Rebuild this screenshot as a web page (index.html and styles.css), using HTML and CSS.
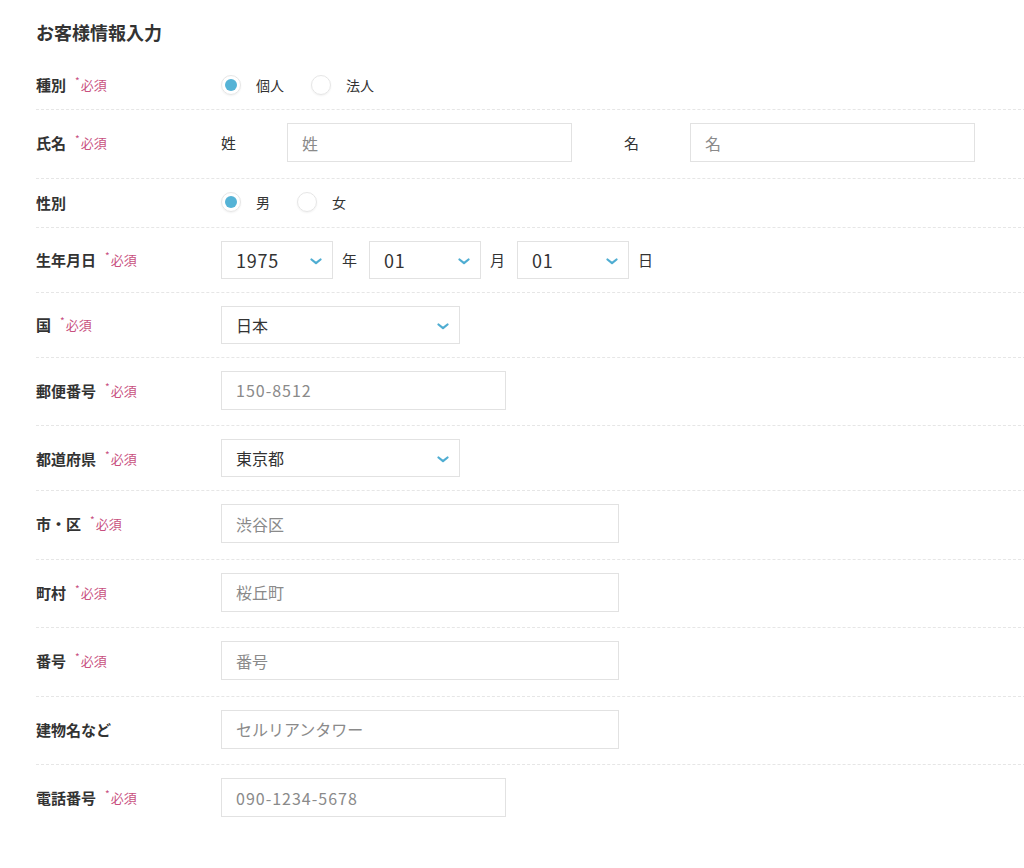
FILE: index.html
```html
<!DOCTYPE html>
<html lang="ja">
<head>
    <meta charset="UTF-8">
    <meta name="viewport" content="width=device-width, initial-scale=1.0">
    <title>お客様情報入力</title>
    <link rel="stylesheet" href="styles.css">
</head>
<body>
    <div class="form">
        <h2 class="form-title">お客様情報入力</h2>

        <div class="row row-radio">
            <div class="label">種別<span class="req"><i>*</i>必須</span></div>
            <div class="field">
                <label class="radio"><span class="radio-mark checked"></span>個人</label>
                <label class="radio"><span class="radio-mark"></span>法人</label>
            </div>
        </div>

        <div class="row">
            <div class="label">氏名<span class="req"><i>*</i>必須</span></div>
            <div class="field">
                <span class="sub-label">姓</span>
                <input class="input w-name" type="text" placeholder="姓">
                <span class="sub-label sub-label-gap">名</span>
                <input class="input w-name" type="text" placeholder="名">
            </div>
        </div>

        <div class="row row-radio">
            <div class="label">性別</div>
            <div class="field">
                <label class="radio"><span class="radio-mark checked"></span>男</label>
                <label class="radio"><span class="radio-mark"></span>女</label>
            </div>
        </div>

        <div class="row row-select">
            <div class="label">生年月日<span class="req"><i>*</i>必須</span></div>
            <div class="field">
                <div class="select w-date">
                    <span class="select-value num">1975</span>
                    <svg class="chevron" width="12" height="7" viewBox="0 0 12 7"><path d="M1.5 1.5 L6 5.2 L10.5 1.5" fill="none" stroke="#4fadd2" stroke-width="2.2" stroke-linecap="round" stroke-linejoin="round"/></svg>
                </div>
                <span class="unit">年</span>
                <div class="select w-date">
                    <span class="select-value num">01</span>
                    <svg class="chevron" width="12" height="7" viewBox="0 0 12 7"><path d="M1.5 1.5 L6 5.2 L10.5 1.5" fill="none" stroke="#4fadd2" stroke-width="2.2" stroke-linecap="round" stroke-linejoin="round"/></svg>
                </div>
                <span class="unit">月</span>
                <div class="select w-date">
                    <span class="select-value num">01</span>
                    <svg class="chevron" width="12" height="7" viewBox="0 0 12 7"><path d="M1.5 1.5 L6 5.2 L10.5 1.5" fill="none" stroke="#4fadd2" stroke-width="2.2" stroke-linecap="round" stroke-linejoin="round"/></svg>
                </div>
                <span class="unit">日</span>
            </div>
        </div>

        <div class="row row-select">
            <div class="label">国<span class="req"><i>*</i>必須</span></div>
            <div class="field">
                <div class="select w-wide">
                    <span class="select-value">日本</span>
                    <svg class="chevron" width="12" height="7" viewBox="0 0 12 7"><path d="M1.5 1.5 L6 5.2 L10.5 1.5" fill="none" stroke="#4fadd2" stroke-width="2.2" stroke-linecap="round" stroke-linejoin="round"/></svg>
                </div>
            </div>
        </div>

        <div class="row">
            <div class="label">郵便番号<span class="req"><i>*</i>必須</span></div>
            <div class="field">
                <input class="input input-num w-mid" type="text" placeholder="150-8512">
            </div>
        </div>

        <div class="row row-select">
            <div class="label">都道府県<span class="req"><i>*</i>必須</span></div>
            <div class="field">
                <div class="select w-wide">
                    <span class="select-value">東京都</span>
                    <svg class="chevron" width="12" height="7" viewBox="0 0 12 7"><path d="M1.5 1.5 L6 5.2 L10.5 1.5" fill="none" stroke="#4fadd2" stroke-width="2.2" stroke-linecap="round" stroke-linejoin="round"/></svg>
                </div>
            </div>
        </div>

        <div class="row">
            <div class="label">市・区<span class="req"><i>*</i>必須</span></div>
            <div class="field">
                <input class="input w-long" type="text" placeholder="渋谷区">
            </div>
        </div>

        <div class="row">
            <div class="label">町村<span class="req"><i>*</i>必須</span></div>
            <div class="field">
                <input class="input w-long" type="text" placeholder="桜丘町">
            </div>
        </div>

        <div class="row">
            <div class="label">番号<span class="req"><i>*</i>必須</span></div>
            <div class="field">
                <input class="input w-long" type="text" placeholder="番号">
            </div>
        </div>

        <div class="row">
            <div class="label">建物名など</div>
            <div class="field">
                <input class="input w-long" type="text" placeholder="セルリアンタワー">
            </div>
        </div>

        <div class="row">
            <div class="label">電話番号<span class="req"><i>*</i>必須</span></div>
            <div class="field">
                <input class="input input-num w-mid" type="text" placeholder="090-1234-5678">
            </div>
        </div>
    </div>
</body>
</html>
```

FILE: styles.css
```css
* {
    margin: 0;
    padding: 0;
    box-sizing: border-box;
    font-family: 'Noto Sans CJK JP', 'Noto Sans', sans-serif;
}

body {
    background: #fff;
    color: #333;
    padding-left: 36px;
    overflow: hidden;
}

.form {
    width: 1000px;
}

.form-title {
    font-size: 18px;
    line-height: 24px;
    font-weight: bold;
    color: #333;
    margin-top: 20px;
    margin-bottom: 17px;
}

.row {
    display: flex;
    align-items: center;
    padding: 13px 0 15.5px;
    border-bottom: 1px dashed #e6e6e6;
}

.row:last-child {
    border-bottom: none;
}

.row-radio {
    padding: 13px 0 14px;
}

.row-select {
    padding: 13px 0 13px;
}

.label {
    width: 185px;
    flex-shrink: 0;
    font-size: 15px;
    font-weight: bold;
    color: #333;
    display: flex;
    align-items: center;
}

.req {
    margin-left: 9px;
    font-size: 13px;
    font-weight: normal;
    color: #c84f80;
    display: flex;
    align-items: flex-start;
}

.req i {
    font-style: normal;
    font-size: 10px;
    line-height: 12px;
    margin-right: 1px;
}

.field {
    display: flex;
    align-items: center;
}

/* ラジオボタン */
.radio {
    display: flex;
    align-items: center;
    font-size: 14px;
    color: #333;
    margin-right: 27px;
    height: 20px;
}

.radio-mark {
    width: 20px;
    height: 20px;
    border-radius: 50%;
    border: 1px solid #e6e6e6;
    box-shadow: 0 1px 2px rgba(0, 0, 0, 0.06);
    margin-right: 15px;
    display: flex;
    align-items: center;
    justify-content: center;
}

.radio-mark.checked::after {
    content: '';
    width: 12px;
    height: 12px;
    border-radius: 50%;
    background: #55b3d6;
}

.sub-label {
    font-size: 15px;
    width: 66px;
}

.sub-label-gap {
    margin-left: 52px;
}

/* 入力欄 */
.input {
    height: 39px;
    border: 1px solid #e2e2e2;
    padding: 0 14px;
    font-size: 16px;
    color: #333;
    outline: none;
    background: #fff;
}

.input::placeholder {
    color: #8a8a8a;
}

.input-num {
    letter-spacing: 1px;
}

.w-name {
    width: 285px;
}

.w-mid {
    width: 285px;
}

.w-long {
    width: 398px;
}

/* セレクト */
.select {
    position: relative;
    height: 38px;
    border: 1px solid #e2e2e2;
    padding: 0 14px;
    display: flex;
    align-items: center;
}

.select-value {
    font-size: 16px;
    color: #333;
}

.select-value.num {
    font-size: 18px;
    letter-spacing: 0.8px;
}

.chevron {
    position: absolute;
    right: 10px;
    top: 16px;
}

.w-date {
    width: 112px;
}

.w-wide {
    width: 239px;
}

.unit {
    font-size: 15px;
    margin: 0 12px 0 9px;
}
```
